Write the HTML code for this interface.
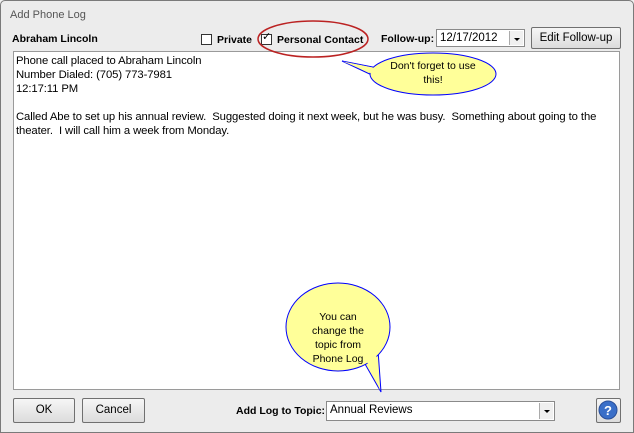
<!DOCTYPE html>
<html><head><style>
*{margin:0;padding:0;box-sizing:border-box}
body{width:634px;height:433px;overflow:hidden;background:#f0f0f0;font-family:"Liberation Sans",sans-serif;font-size:12px;position:relative}
.frame{position:absolute;left:0;top:0;width:634px;height:433px;border:1px solid #7a7a7a;border-radius:5px 5px 0 0;background:#ececec}
.title{position:absolute;left:10px;top:9px;color:#555;font-size:11px}
.a{position:absolute;white-space:nowrap}
.b{font-weight:bold;font-size:10.5px}
.btn{position:absolute;border:1px solid #707070;border-radius:2px;background:linear-gradient(#f6f6f6,#dcdcdc);text-align:center;font-size:11.5px}
.ta{position:absolute;left:13px;top:51px;width:607px;height:339px;background:#fff;border:1px solid #9a9a9a;padding:2px 2px;font-size:11.3px;line-height:14px;color:#000;letter-spacing:-0.1px}
.cb{position:absolute;width:11px;height:11px;border:1px solid #333;background:#fff}
.combo{position:absolute;background:#fff;border:1px solid #8a8a8a;font-size:11.5px;padding:2px 3px;white-space:nowrap}
.dd{position:absolute;right:1px;top:1px;bottom:1px;width:14px;border-left:1px solid #aaa;background:#f0f0f0}
.dd:after{content:"";position:absolute;left:4px;top:7px;border-left:3px solid transparent;border-right:3px solid transparent;border-top:3px solid #000}
</style></head><body>
<div class="frame"></div>
<div class="title">Add Phone Log</div>
<div class="a b" style="left:12px;top:33px">Abraham Lincoln</div>
<div class="cb" style="left:201px;top:34px"></div>
<div class="a b" style="left:217px;top:34px">Private</div>
<div class="cb" style="left:261px;top:34px"></div>
<div class="a" style="left:262px;top:30px;font-size:11px">✓</div>
<div class="a b" style="left:277px;top:34px">Personal Contact</div>
<div class="a b" style="left:381px;top:33px">Follow-up:</div>
<div class="combo" style="left:436px;top:29px;width:89px;height:18px">12/17/2012<div class="dd"></div></div>
<div class="btn" style="left:531px;top:27px;width:90px;height:22px;line-height:20px">Edit Follow-up</div>
<div class="ta">Phone call placed to Abraham Lincoln<br>Number Dialed: (705) 773-7981<br>12:17:11 PM<br><br>Called Abe to set up his annual review.&nbsp; Suggested doing it next week, but he was busy.&nbsp; Something about going to the theater.&nbsp; I will call him a week from Monday.</div>
<div class="btn" style="left:13px;top:398px;width:62px;height:25px;line-height:23px">OK</div>
<div class="btn" style="left:82px;top:398px;width:63px;height:25px;line-height:23px">Cancel</div>
<div class="a b" style="left:236px;top:405px">Add Log to Topic:</div>
<div class="combo" style="left:326px;top:401px;width:229px;height:20px">Annual Reviews<div class="dd"></div></div>
<div class="btn" style="left:596px;top:398px;width:25px;height:25px"></div>
<svg class="a" style="left:0;top:0" width="634" height="433">
<ellipse cx="313" cy="39" rx="55" ry="18" fill="none" stroke="#b22" stroke-width="1.5"/>
<polygon points="342,61 378,68 378,78" fill="#ffff99" stroke="#00f"/>
<ellipse cx="433" cy="74" rx="63" ry="21" fill="#ffff99" stroke="#00f"/>
<polygon points="343,61.5 380,69 380,77" fill="#ffff99"/>
<polygon points="381,392 365,364 378,350" fill="#ffff99" stroke="#00f"/>
<ellipse cx="338" cy="327" rx="52" ry="44" fill="#ffff99" stroke="#00f"/>
<polygon points="380,390 367,362 376,352" fill="#ffff99"/>
<circle cx="608" cy="410" r="9" fill="#3a6fc8" stroke="#2a4f98"/>
<text x="608" y="415" font-size="13" font-weight="bold" fill="#fff" text-anchor="middle" font-family="Liberation Sans">?</text>
</svg>
<div class="a" style="left:368px;top:59px;width:130px;text-align:center;font-size:10.5px;line-height:14px">Don't forget to use<br>this!</div>
<div class="a" style="left:288px;top:310px;width:100px;text-align:center;font-size:10.5px;line-height:14px">You can<br>change the<br>topic from<br>Phone Log</div>
</body></html>
